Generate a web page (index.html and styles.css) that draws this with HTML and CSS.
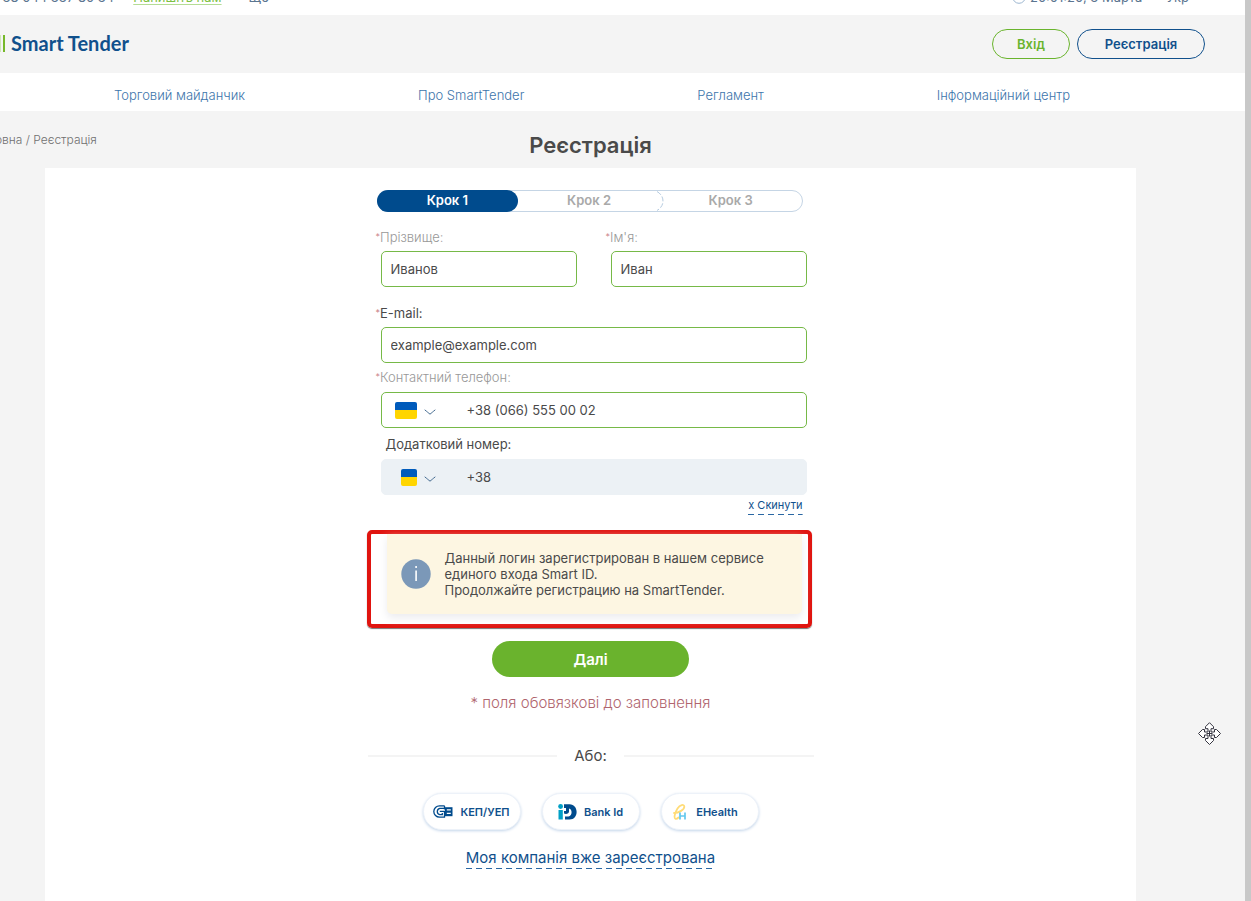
FILE: index.html
```html
<!DOCTYPE html>
<html lang="uk">
<head>
<meta charset="utf-8">
<meta name="viewport" content="width=device-width, initial-scale=1">
<title>Реєстрація</title>
<link rel="stylesheet" href="styles.css">
</head>
<body>
<div class="topbar">
  <div class="topbar-row">
    <span class="phone">+38 044 337 80 34</span>
    <a class="write" href="#">Напишіть нам</a>
    <span>Ще</span><svg class="tiny" viewBox="0 0 8 6"><path d="M1 1l3 3 3-3"/></svg>
    <span class="clock"><svg class="clock-icon" viewBox="0 0 14 14"><circle cx="7" cy="7" r="6.3"/><path d="M7 3.5V7h3"/></svg>20:01:20, 3 Марта</span>
    <span>Укр</span><svg class="tiny" viewBox="0 0 8 6"><path d="M1 1l3 3 3-3"/></svg>
  </div>
</div>
<header class="header">
  <a class="logo" href="#"><span class="logo-bars"></span>Smart Tender</a>
  <div class="auth">
    <button class="pill pill-green" type="button">Вхід</button>
    <button class="pill pill-blue" type="button">Реєстрація</button>
  </div>
</header>
<nav class="nav">
  <a href="#">Торговий майданчик</a>
  <a href="#">Про SmartTender</a>
  <a href="#">Регламент</a>
  <a href="#">Інформаційний центр</a>
</nav>
<div class="heading">
  <div class="crumbs"><a href="#">Головна</a> / Реєстрація</div>
  <h1>Реєстрація</h1>
</div>
<main class="card">
  <form class="column">
    <div class="steps">
      <span class="step active">Крок 1</span>
      <span class="step second">Крок 2</span>
      <svg class="step-end" viewBox="0 0 7 20"><path d="M0 0.5C8 5 8 15 0 19.5"/></svg>
      <span class="step">Крок 3</span>
    </div>
    <div class="fields">
      <div class="names">
        <div>
          <label class="muted" for="last"><i>*</i>Прізвище:</label>
          <input class="box" id="last" type="text" value="Иванов">
        </div>
        <div>
          <label class="muted" for="first"><i>*</i>Ім'я:</label>
          <input class="box" id="first" type="text" value="Иван">
        </div>
      </div>
      <div class="field-mail">
        <label for="mail"><i>*</i>E-mail:</label>
        <input class="box" id="mail" type="email" value="example@example.com">
      </div>
      <div class="field-phone">
        <label class="muted" for="phone"><i>*</i>Контактний телефон:</label>
        <div class="box phone-box">
          <button class="country" type="button" aria-label="Країна"><span class="flag"></span><svg class="chevron" viewBox="0 0 12 6"><path d="M0.7 0.8C3 2.6 4.5 4 6 5.2 7.5 4 9 2.6 11.3 0.8"/></svg></button>
          <input id="phone" type="tel" value="+38 (066) 555 00 02">
        </div>
      </div>
      <div class="field-extra">
        <label class="inset" for="extra">Додатковий номер:</label>
        <div class="box phone-box filled">
          <button class="country" type="button" aria-label="Країна"><span class="flag flag-small"></span><svg class="chevron" viewBox="0 0 12 6"><path d="M0.7 0.8C3 2.6 4.5 4 6 5.2 7.5 4 9 2.6 11.3 0.8"/></svg></button>
          <input id="extra" type="tel" value="+38">
        </div>
      </div>
      <button class="reset dashed" type="button">x Скинути</button>
    </div>
    <div class="highlight">
      <div class="notice">
        <svg class="info" viewBox="0 0 30 30"><circle cx="15" cy="15" r="14.7"/><path d="M14.3 11.5h1.6V22h-1.6zM14.3 7h1.6v2h-1.6z"/></svg>
        <p>Данный логин зарегистрирован в нашем сервисе единого входа Smart ID.<br>Продолжайте регистрацию на SmartTender.</p>
      </div>
    </div>
    <button class="next" type="submit">Далі</button>
    <p class="required">* поля обовязкові до заповнення</p>
    <div class="or">Або:</div>
    <div class="socials">
      <button class="social social-kep" type="button">
        <svg class="icon-kep" viewBox="0 0 20 13"><g fill="none" stroke="#004b8d" stroke-width="1.3"><path d="M11.500.8H6.500A5.700 5.700 0 0 0 6.500 12.200H11.500V6.300H6.800"/><path d="M11.500.8V4.500"/><path d="M11 3.300H6.800A3.300 3.300 0 0 0 6.800 9.700H9.300V8"/></g><path fill="#004b8d" d="M12 2.200h7.500v9H12z"/><path fill="#fff" d="M13.800 4.200h4v1.200h-4zM13.800 7.800h4V9h-4z"/></svg>
        КЕП/УЕП
      </button>
      <button class="social" type="button">
        <svg class="icon-bank" viewBox="0 0 19 16"><circle cx="2.6" cy="2.500" r="2.400" fill="#00a0c6"/><path fill="#00a0c6" d="M.5 6h4.300v9.500H.5z"/><path fill="#004b8d" d="M6 .3h5.500C21 .5 21 15.500 11.500 15.500H7V12.500h3.500C14.500 12 14.500 5 11 4.500V7.500C11 9.500 8.500 10.500 6 9.500V7h2V4H6z"/></svg>
        Bank Id
      </button>
      <button class="social social-health" type="button">
        <svg class="icon-health" viewBox="0 0 13 16"><path fill="none" stroke="#ffdc78" stroke-width="1.800" stroke-linecap="round" d="M1 9C6 9 11.500 5.500 11.300 2.500 11 0 7 .5 4.500 4.500 2 8.500.5 14 2.500 14.800c1 .3 2-.3 3-1.300"/><path fill="none" stroke="#63c8ee" stroke-width="1.700" d="M7 8.500V15.500M12 8.500V15.500M7 12h5"/></svg>
        EHealth
      </button>
    </div>
    <a class="company dashed" href="#">Моя компанія вже зареєстрована</a>
  </form>
</main>
<svg class="cursor" viewBox="0 0 23 23"><path d="M11.500.7l4 4v2H13V10h3.500V7.500h2l4 4-4 4h-2V13H13v3.500h2.500v2l-4 4-4-4v-2H10V13H6.500v2.500h-2l-4-4 4-4h2V10H10V6.700H7.500v-2z"/><path d="M11.500 8.500v6M8.500 11.500h6"/></svg>
</body>
</html>
```

FILE: styles.css
```css
* { box-sizing: border-box; }
body {
  margin: 0;
  min-height: 100vh;
  display: flex;
  flex-direction: column;
  border-right: 6px solid #c8c8c8;
  background: #f4f4f4;
  color: #4a4a4a;
  font-family: Inter, "Open Sans", sans-serif;
  font-size: 13px;
  overflow-x: hidden;
}
a { color: inherit; text-decoration: none; }
button, input { font: inherit; color: inherit; }
button { cursor: pointer; }
p { margin: 0; }

.topbar { height: 15px; overflow: hidden; background: #fff; }
.topbar-row {
  display: flex;
  align-items: center;
  height: 16px;
  margin: -11px 42px 0 -6px;
  color: #5b7590;
}
.write {
  margin: 0 27px 0 19px;
  color: #7dc143;
  text-decoration: underline 1px #b5dc95;
  text-underline-offset: 2px;
  text-decoration-skip-ink: none;
}
.tiny { width: 8px; height: 6px; margin-left: 6px; fill: none; stroke: #8fa4b8; }
.clock { display: flex; align-items: center; gap: 4px; margin: 0 24px 0 auto; }
.clock-icon { width: 14px; height: 14px; fill: none; stroke: #9cb6d0; }

.header {
  display: flex;
  align-items: center;
  justify-content: space-between;
  height: 58px;
  padding-right: 40px;
}
.logo {
  display: flex;
  align-items: center;
  gap: 6px;
  padding-bottom: 2px;
  color: #10508c;
  font-family: Lato, sans-serif;
  font-size: 20px;
  font-weight: 700;
}
.logo-bars {
  width: 5px;
  height: 17px;
  border-right: 2px solid #76b82a;
  border-left: 1px solid #cfe6b8;
}
.auth { display: flex; gap: 7px; }
.pill {
  height: 30px;
  border: 1px solid;
  border-radius: 15px;
  background: transparent;
  font-size: 13px;
  font-weight: 600;
}
.pill-green { width: 78px; color: #6ab42d; }
.pill-blue { width: 128px; color: #10508c; }

.nav {
  display: flex;
  align-items: center;
  justify-content: space-between;
  height: 38px;
  padding: 5px 175px 0 114px;
  background: #fff;
  color: #3d75ab;
  font-size: 13px;
  font-weight: 300;
}

.heading {
  display: grid;
  grid-template-columns: 45px 1fr 109px;
  height: 57px;
}
.crumbs {
  grid-area: 1 / 1 / 2 / 3;
  margin: 21px 0 0 -25px;
  color: #707070;
  font-size: 12px;
  font-weight: 300;
  line-height: 16px;
}
.heading h1 {
  grid-area: 1 / 2;
  justify-self: center;
  margin: 20px 0 0;
  font-size: 22px;
  font-weight: 600;
  line-height: 28px;
}

.card {
  flex: 1;
  margin: 0 109px 0 45px;
  padding: 22px 0 24px;
  background: #fff;
}
.column {
  display: flex;
  flex-direction: column;
  width: 100%;
  max-width: 446px;
  margin: 0 auto;
}

.steps {
  display: flex;
  align-items: stretch;
  height: 22px;
  margin: 0 11px 0 9px;
  border: 1px solid #c5d5e5;
  border-radius: 11px;
  color: #a9a9a9;
  font-weight: 600;
  line-height: 19px;
  text-align: center;
}
.step { flex: 1; }
.step.active {
  margin: -1px 0 -1px -1px;
  border-radius: 11px;
  background: #004b8d;
  color: #fff;
  line-height: 21px;
}
.step-end { width: 7px; height: 20px; margin: 0 -4px 0 -3px; fill: none; stroke: #b5cbe0; stroke-dasharray: 5 2; }

.fields { display: flex; flex-direction: column; margin: 15px 7px 0 13px; }
.names { display: grid; grid-template-columns: 1fr 1fr; gap: 34px; }
label { display: block; margin: 0 0 4px -5px; line-height: 20px; }
label i { color: #c97c84; font-size: 9px; font-style: normal; vertical-align: 2px; }
.muted { color: #989898; font-weight: 300; }
.inset { margin-left: 5px; }
.box {
  display: block;
  width: 100%;
  height: 36px;
  padding: 0 9px;
  border: 1px solid #76b947;
  border-radius: 5px;
  background: #fff;
  outline: none;
}
.field-mail { margin-top: 16px; }
.field-phone { margin-top: 4px; }
.field-extra { margin-top: 6px; }
.field-phone label, .field-extra label { margin-bottom: 5px; }
.phone-box { display: flex; align-items: center; padding: 0 9px 0 13px; }
.phone-box input { flex: 1; min-width: 0; padding: 0; border: 0; background: none; outline: none; }
.phone-box.filled { border-color: #ecf1f5; background: #ecf1f5; }
.country {
  display: flex;
  align-items: center;
  justify-content: flex-end;
  gap: 7px;
  width: 41px;
  margin-right: 31px;
  padding: 0;
  border: 0;
  background: none;
}
.flag { width: 22px; height: 17px; border-radius: 2px; background: linear-gradient(#005bbb 50%, #ffd500 50%); }
.flag-small { width: 16px; }
.chevron { width: 12px; height: 6px; margin-top: 3px; fill: none; stroke: #42698f; }
.dashed {
  padding: 0;
  border: 0;
  background: repeating-linear-gradient(90deg, #2a67a3 0 6px, transparent 6px 10px) bottom / 100% 1px no-repeat;
  color: #10508c;
}
.reset { align-self: flex-end; height: 18px; margin: 2px 4px 0 0; padding-bottom: 2px; font-size: 11px; line-height: 16px; }

.highlight {
  margin: 15px 2px 0 -1px;
  padding: 0 6px 10px 16px;
  border: 4px solid #e0140f;
  border-radius: 5px;
  box-shadow: 0 1px 1px #777;
}
.notice {
  display: flex;
  align-items: center;
  gap: 14px;
  min-height: 80px;
  padding: 0 16px 0 14px;
  border-radius: 0 0 5px 5px;
  background: #fdf6e2;
  box-shadow: 0 4px 8px #ececef;
  line-height: 16px;
}
.info { flex: none; width: 30px; height: 30px; fill: #7b98b8; }
.info path { fill: #fff; }
.next {
  align-self: center;
  width: 197px;
  height: 36px;
  margin-top: 13px;
  border: 0;
  border-radius: 18px;
  background: #6ab32d;
  color: #fff;
  font-size: 15px;
  font-weight: 600;
}
.required { margin-top: 16px; color: #b0656e; font-size: 15px; font-weight: 300; line-height: 20px; text-align: center; }
.or { display: flex; align-items: center; gap: 17px; margin-top: 33px; font-size: 15px; line-height: 20px; }
.or::before, .or::after { content: ""; flex: 1; height: 2px; background: #f4f4f4; }
.socials { display: flex; justify-content: center; gap: 21px; margin-top: 27px; }
.social {
  display: flex;
  align-items: center;
  justify-content: center;
  gap: 7px;
  width: 98px;
  height: 37px;
  padding: 0;
  border: 1px solid #edf2f9;
  border-radius: 19px;
  background: #fff;
  box-shadow: 0 1px 3px #c3d5ea;
  color: #10508c;
  font-size: 11px;
  font-weight: 600;
}
.social-health { gap: 10px; padding-right: 8px; }
.icon-kep { width: 20px; height: 13px; }
.icon-bank { width: 19px; height: 16px; }
.icon-health { width: 13px; height: 16px; }
.company { align-self: center; height: 21px; margin-top: 18px; font-size: 15px; line-height: 20px; }

.cursor {
  position: absolute;
  top: 722px;
  right: 30px;
  width: 23px;
  height: 23px;
  fill: #fff;
  stroke: #33333f;
}
```
